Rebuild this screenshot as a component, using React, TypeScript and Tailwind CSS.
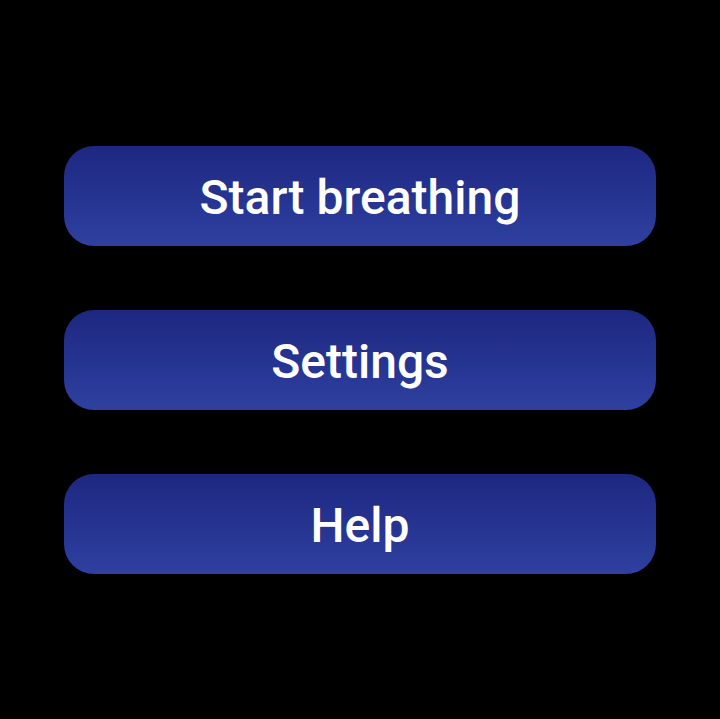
export default function App() {
  const items = ["Start breathing", "Settings", "Help"];
  return (
    <div className="w-[720px] h-[719px] bg-black flex flex-col items-center pt-[146px] gap-[64px]" style={{ fontFamily: "Roboto, sans-serif" }}>
      {items.map((t) => (
        <button
          key={t}
          className="w-[592px] h-[100px] pt-[4px] rounded-[30px] bg-gradient-to-b from-[#1d2781] to-[#2f40a0] text-white text-[48px] font-medium flex items-center justify-center"
        >
          {t}
        </button>
      ))}
    </div>
  );
}
